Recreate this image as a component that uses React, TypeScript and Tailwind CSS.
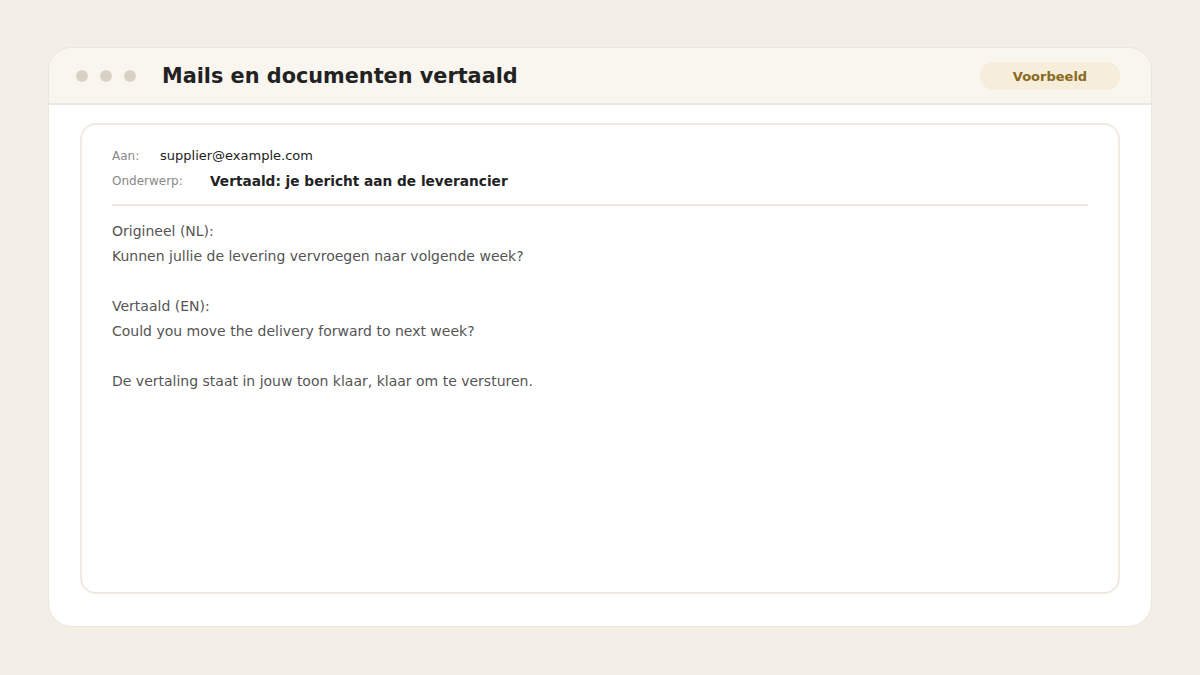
export default function App() {
  return (
    <div
      className="w-[1200px] h-[675px] bg-[#f3efe7] px-12 pt-[47px] pb-12 flex"
      style={{ fontFamily: '"DejaVu Sans", sans-serif' }}
    >
      <div className="flex-1 flex flex-col bg-white rounded-[24px] border border-[#ebe6dc] overflow-hidden">
        <div className="h-[57px] shrink-0 flex items-center bg-[#f9f6ef] border-b-2 border-[#ece8e0] pl-[27px] pr-[31px]">
          <div className="flex gap-3">
            <span className="w-3 h-3 rounded-full bg-[#d8d2c5]" />
            <span className="w-3 h-3 rounded-full bg-[#d8d2c5]" />
            <span className="w-3 h-3 rounded-full bg-[#d8d2c5]" />
          </div>
          <h1 className="ml-[26px] mt-[2px] text-[20.8px] font-bold text-[#222222] leading-none">
            Mails en documenten vertaald
          </h1>
          <div className="ml-auto w-[140px] h-7 pt-[2px] rounded-full bg-[#f6eddb] flex items-center justify-center text-[13px] font-bold text-[#8a6a1e]">
            Voorbeeld
          </div>
        </div>
        <div className="flex-1 flex px-[31px] pt-[18px] pb-[32px]">
          <div className="flex-1 rounded-[16px] border-2 border-[#efebe3] px-[30px] pt-[22px]">
            <div className="flex items-center h-[18px]">
              <span className="w-12 text-[12px] text-[#888888]">Aan:</span>
              <span className="text-[13px] text-[#222222]">supplier@example.com</span>
            </div>
            <div className="flex items-center h-[18px] mt-[7px]">
              <span className="w-[98px] text-[12px] text-[#888888]">Onderwerp:</span>
              <span className="text-[13.7px] font-bold text-[#222222]">Vertaald: je bericht aan de leverancier</span>
            </div>
            <div className="h-[2px] bg-[#ebe7df] mt-[14px]" />
            <div className="mt-[13px] text-[14px] leading-[25px] text-[#555555] whitespace-pre-wrap">
              {"Origineel (NL):\nKunnen jullie de levering vervroegen naar volgende week?\n\nVertaald (EN):\nCould you move the delivery forward to next week?\n\nDe vertaling staat in jouw toon klaar, klaar om te versturen."}
            </div>
          </div>
        </div>
      </div>
    </div>
  );
}
